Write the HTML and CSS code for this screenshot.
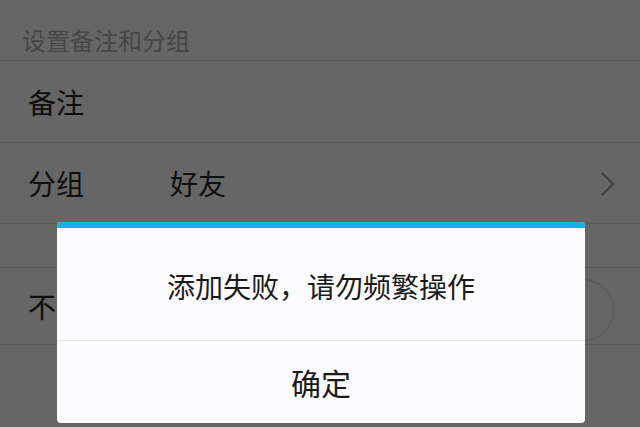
FILE: index.html
```html
<!DOCTYPE html>
<html lang="zh-CN">
<head>
<meta charset="utf-8">
<title>设置备注和分组</title>
<link rel="stylesheet" href="styles.css">
</head>
<body>
<div class="screen">
  <div class="section-title">设置备注和分组</div>
  <div class="row"><span class="label">备注</span></div>
  <div class="row row-group">
    <span class="label">分组</span>
    <span class="value">好友</span>
    <svg class="chevron" width="14" height="24" viewBox="0 0 14 24" aria-hidden="true">
      <path d="M1.5 1.5 L12 12 L1.5 22.5" fill="none" stroke="#9a9a9a" stroke-width="2" stroke-linecap="round" stroke-linejoin="round"/>
    </svg>
  </div>
  <div class="spacer"></div>
  <div class="row row-toggle">
    <span class="label">不让他看</span>
    <span class="toggle"></span>
  </div>
  <div class="row row-last"></div>
</div>
<div class="mask"></div>
<div class="dialog">
  <div class="dialog-bar"></div>
  <div class="dialog-message">添加失败，请勿频繁操作</div>
  <div class="dialog-button">确定</div>
</div>
</body>
</html>
```
FILE: styles.css
```css
html, body {
  margin: 0;
  padding: 0;
}
body {
  width: 640px;
  height: 427px;
  overflow: hidden;
  background: #ffffff;
  font-family: "Noto Sans CJK SC", "Noto Sans", sans-serif;
  position: relative;
}
.screen {
  display: flex;
  flex-direction: column;
}
.section-title {
  height: 61px;
  box-sizing: border-box;
  padding: 18px 0 0 22px;
  display: flex;
  align-items: center;
  font-size: 24px;
  color: #b0b0b0;
  border-bottom: 1px solid #e4e4e4;
}
.row {
  height: 81px;
  box-sizing: content-box;
  display: flex;
  align-items: center;
  padding-left: 28px;
  border-bottom: 1px solid #e4e4e4;
  font-size: 28px;
  color: #262626;
}
.row-group {
  height: 80px;
}
.row-group .value {
  margin-left: 86px;
}
.row-group .chevron {
  margin-left: auto;
  margin-right: 25px;
  margin-top: 2px;
}
.spacer {
  height: 43px;
  border-bottom: 1px solid #e4e4e4;
}
.row-toggle {
  height: 76px;
}
.toggle {
  margin-left: auto;
  margin-right: 26px;
  margin-top: 8px;
  width: 110px;
  height: 60px;
  border: 1.5px solid #d8d8d8;
  border-radius: 32px;
}
.row-last {
  height: 81px;
  border-bottom: none;
}
.mask {
  position: absolute;
  inset: 0;
  background: rgba(0, 0, 0, 0.6);
}
.dialog {
  position: absolute;
  left: 57px;
  top: 222px;
  width: 528px;
  height: 201px;
  background: #fcfcfe;
  border-radius: 4px;
  overflow: hidden;
  display: flex;
  flex-direction: column;
}
.dialog-bar {
  height: 6px;
  background: #19afe6;
}
.dialog-message {
  height: 113px;
  box-sizing: border-box;
  padding-top: 4px;
  display: flex;
  align-items: center;
  justify-content: center;
  font-size: 28px;
  color: #1a1a1a;
  border-bottom: 1px solid #e3e3e6;
}
.dialog-button {
  flex: 1;
  display: flex;
  align-items: center;
  justify-content: center;
  font-size: 30px;
  color: #1a1a1a;
}
```
